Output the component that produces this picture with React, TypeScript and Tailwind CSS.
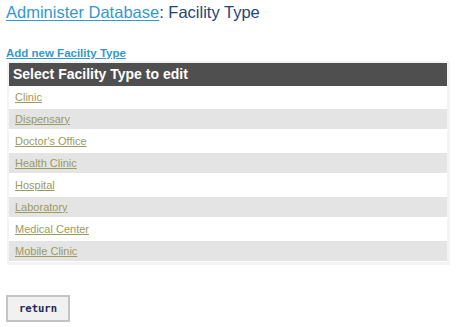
const facilityTypes = [
  'Clinic',
  'Dispensary',
  "Doctor's Office",
  'Health Clinic',
  'Hospital',
  'Laboratory',
  'Medical Center',
  'Mobile Clinic',
];

export default function App() {
  return (
    <div className="min-h-[327px] w-[456px] bg-white font-['Liberation_Sans',Arial,sans-serif]">
      {/* Title */}
      <div className="pl-[6px] pt-[2px] text-[16.5px] leading-[20px] text-[#1f4577]">
        <a href="#" className="text-[#3399cc] underline underline-offset-2">
          Administer Database
        </a>
        : Facility Type
      </div>

      <div className="mt-[25px] pl-[6px] text-[11.5px] leading-[13px] font-bold">
        <a href="#" className="text-[#3399cc] underline">
          Add new Facility Type
        </a>
      </div>

      {/* Table panel */}
      <div className="mt-[1px] ml-[7px] w-[443px] bg-[#f3f3f3] pt-[2px] pl-[2px] pr-[3px] pb-[3px]">
        <div className="h-[23px] bg-[#4f4f4f] pl-[4px] flex items-center text-[14px] font-bold text-white">
          Select Facility Type to edit
        </div>
        <div className="bg-white pt-[1px] pb-[1px] flex flex-col gap-[2px]">
          {facilityTypes.map((name, i) => (
            <div
              key={name}
              className={`h-[20px] pl-[6px] flex items-center text-[11px] ${i % 2 === 1 ? 'bg-[#e4e4e4]' : 'bg-white'}`}
            >
              <a href="#" className="text-[#9c9a5c] underline">
                {name}
              </a>
            </div>
          ))}
        </div>
      </div>

      {/* Return */}
      <div className="mt-[30px] pl-[6px]">
        <button className="h-[27px] w-[64px] border-2 border-[#c4c4c4] bg-[#f1f1f1] text-[10.5px] font-bold text-[#1b2a5a] font-['DejaVu_Sans_Mono',monospace]">
          return
        </button>
      </div>
    </div>
  );
}
